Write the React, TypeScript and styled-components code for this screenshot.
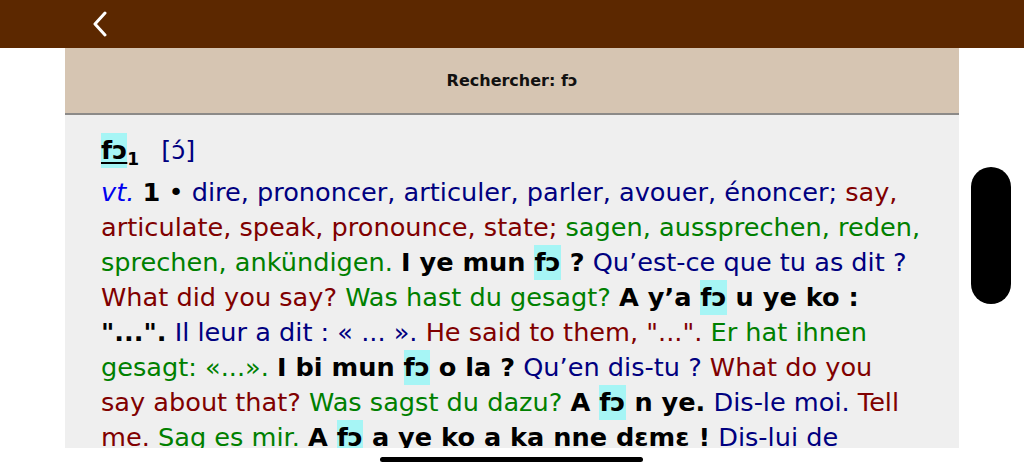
import React from "react";
import styled, { createGlobalStyle } from "styled-components";

const GlobalStyle = createGlobalStyle`
  html, body {
    margin: 0;
    padding: 0;
    background: #ffffff;
    font-family: "DejaVu Sans", "Noto Sans", sans-serif;
  }
`;

const Screen = styled.div`
  position: relative;
  width: 1024px;
  height: 472px;
  overflow: hidden;
  background: #ffffff;
  display: flex;
  flex-direction: column;
`;

const TopBar = styled.div`
  height: 48px;
  flex: none;
  background: #5c2800;
  display: flex;
  align-items: center;
  padding-left: 88px;
`;

const BackButton = styled.button`
  border: 0;
  background: none;
  padding: 0;
  width: 24px;
  height: 28px;
  display: flex;
  align-items: center;
  justify-content: center;
  cursor: pointer;
`;

const Panel = styled.div`
  width: 894px;
  margin: 0 auto;
  display: flex;
  flex-direction: column;
  height: 400px;
`;

const SearchHeader = styled.div`
  height: 65px;
  flex: none;
  background: #d6c5b2;
  border-bottom: 2px solid #8c8a88;
  display: flex;
  align-items: center;
  justify-content: center;
  font-weight: bold;
  font-size: 16px;
  color: #111;
`;

const Content = styled.div`
  flex: 1;
  background: #efefef;
  overflow: hidden;
  padding: 18px 36px 0 36px;
`;

const HeadLine = styled.div`
  display: flex;
  align-items: baseline;
  gap: 22px;
  height: 42px;
  font-size: 25.6px;
  line-height: 35px;
`;

const HeadWord = styled.span`
  font-weight: bold;
  color: #000;
`;

const HeadMark = styled.span`
  display: inline-block;
  background: #a6f5f5;
  text-decoration: underline;
  text-underline-offset: 3px;
`;

const Sub = styled.sub`
  font-size: 17px;
  vertical-align: -6px;
  line-height: 0;
`;

const Phon = styled.span`
  color: #000080;
`;

const Body = styled.p`
  margin: 0;
  font-size: 25.6px;
  line-height: 35px;
  color: #000;
`;

const tones: Record<string, string> = {
  fr: "#000080",
  en: "#800000",
  de: "#008000",
};

const Gloss = styled.span<{ $lang: "fr" | "en" | "de" }>`
  color: ${(p) => tones[p.$lang]};
`;

const Pos = styled.span`
  color: #0000ee;
  font-style: italic;
`;

const Ex = styled.b`
  font-weight: bold;
  color: #000;
`;

const Hit = styled.span`
  display: inline-block;
  background: #a6f5f5;
  line-height: 35px;
`;

const ScrollThumb = styled.div`
  position: absolute;
  left: 971px;
  top: 167px;
  width: 40px;
  height: 137px;
  border-radius: 20px;
  background: #000;
`;

const HomeIndicator = styled.div`
  position: absolute;
  left: 380px;
  top: 457px;
  width: 263px;
  height: 5px;
  border-radius: 3px;
  background: #000;
`;

const Chevron = () => (
  <svg width="16" height="26" viewBox="0 0 16 26">
    <path
      d="M13 2 L3 13 L13 24"
      fill="none"
      stroke="#fff"
      strokeWidth="3"
      strokeLinecap="round"
      strokeLinejoin="round"
    />
  </svg>
);

export default function App() {
  return (
    <>
      <GlobalStyle />
      <Screen>
        <TopBar>
          <BackButton aria-label="Retour">
            <Chevron />
          </BackButton>
        </TopBar>
        <Panel>
          <SearchHeader>Rechercher: fɔ</SearchHeader>
          <Content>
            <HeadLine>
              <HeadWord>
                <HeadMark>fɔ</HeadMark>
                <Sub>1</Sub>
              </HeadWord>
              <Phon>[ɔ́]</Phon>
            </HeadLine>
            <Body>
              <Pos>vt.</Pos> <Ex>1</Ex> •{" "}
              <Gloss $lang="fr">
                dire, prononcer, articuler, parler, avouer, énoncer;
              </Gloss>{" "}
              <Gloss $lang="en">
                say, articulate, speak, pronounce, state;
              </Gloss>{" "}
              <Gloss $lang="de">
                sagen, aussprechen, reden, sprechen, ankündigen.
              </Gloss>{" "}
              <Ex>
                I ye mun <Hit>fɔ</Hit> ?
              </Ex>{" "}
              <Gloss $lang="fr">Qu’est-ce que tu as dit ?</Gloss>{" "}
              <Gloss $lang="en">What did you say?</Gloss>{" "}
              <Gloss $lang="de">Was hast du gesagt?</Gloss>{" "}
              <Ex>
                A y’a <Hit>fɔ</Hit> u ye ko : "...".
              </Ex>{" "}
              <Gloss $lang="fr">Il leur a dit : « ... ».</Gloss>{" "}
              <Gloss $lang="en">He said to them, "...".</Gloss>{" "}
              <Gloss $lang="de">Er hat ihnen gesagt: «...».</Gloss>{" "}
              <Ex>
                I bi mun <Hit>fɔ</Hit> o la ?
              </Ex>{" "}
              <Gloss $lang="fr">Qu’en dis-tu ?</Gloss>{" "}
              <Gloss $lang="en">What do you say about that?</Gloss>{" "}
              <Gloss $lang="de">Was sagst du dazu?</Gloss>{" "}
              <Ex>
                A <Hit>fɔ</Hit> n ye.
              </Ex>{" "}
              <Gloss $lang="fr">Dis-le moi.</Gloss>{" "}
              <Gloss $lang="en">Tell me.</Gloss>{" "}
              <Gloss $lang="de">Sag es mir.</Gloss>{" "}
              <Ex>
                A <Hit>fɔ</Hit> a ye ko a ka nne dɛmɛ !
              </Ex>{" "}
              <Gloss $lang="fr">Dis-lui de m’aider !</Gloss>{" "}
              <Gloss $lang="en">Tell him to help me!</Gloss>
            </Body>
          </Content>
        </Panel>
        <ScrollThumb />
        <HomeIndicator />
      </Screen>
    </>
  );
}
